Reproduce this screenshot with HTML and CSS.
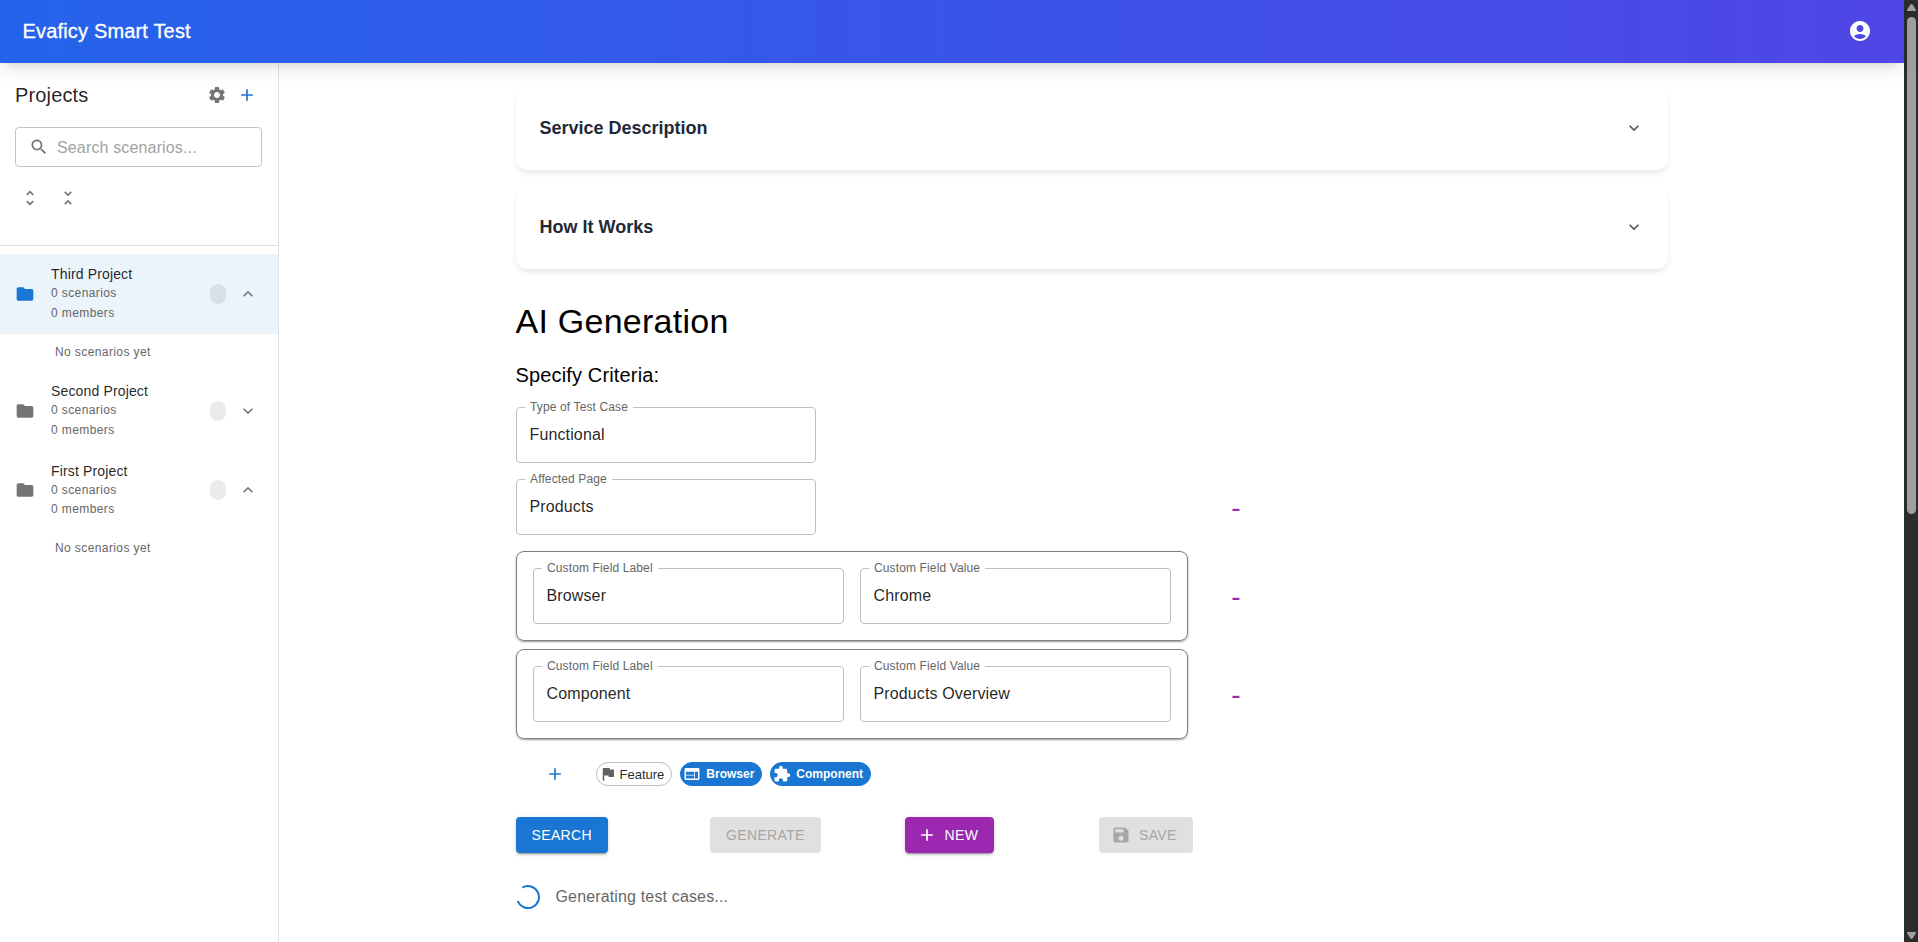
FILE: index.html
```html
<!DOCTYPE html>
<html lang="en">
<head>
    <meta charset="UTF-8">
    <meta name="viewport" content="width=device-width, initial-scale=1.0">
    <title>Evaficy Smart Test</title>
    <link rel="stylesheet" href="styles.css">
</head>
<body>
    <svg class="sprite">
        <symbol id="add" viewBox="0 0 24 24"><path d="M19 13h-6v6h-2v-6H5v-2h6V5h2v6h6z"/></symbol>
        <symbol id="more" viewBox="0 0 24 24"><path d="M16.59 8.59 12 13.17 7.41 8.59 6 10l6 6 6-6z"/></symbol>
        <symbol id="less" viewBox="0 0 24 24"><path d="m12 8-6 6 1.41 1.41L12 10.83l4.59 4.58L18 14z"/></symbol>
        <symbol id="folder" viewBox="0 0 24 24"><path d="M10 4H4c-1.1 0-1.99.9-1.99 2L2 18c0 1.1.9 2 2 2h16c1.1 0 2-.9 2-2V8c0-1.1-.9-2-2-2h-8z"/></symbol>
    </svg>

    <div class="app">
        <header class="header">
            <div class="brand">Evaficy Smart Test</div>
            <svg class="icon icon-lg" viewBox="0 0 24 24"><path d="M12 2C6.48 2 2 6.48 2 12s4.48 10 10 10 10-4.48 10-10S17.52 2 12 2m0 4c1.93 0 3.5 1.57 3.5 3.5S13.93 13 12 13s-3.5-1.57-3.5-3.5S10.07 6 12 6m0 14c-2.03 0-4.43-.82-6.14-2.88C7.55 15.8 9.68 15 12 15s4.45.8 6.14 2.12C16.43 19.18 14.03 20 12 20"/></svg>
        </header>

        <div class="content">
            <aside class="sidebar">
                <div class="sidebar-top">
                    <div class="sidebar-title">
                        <h2>Projects</h2>
                        <svg class="icon" viewBox="0 0 24 24"><path d="M19.14 12.94c.04-.3.06-.61.06-.94 0-.32-.02-.64-.07-.94l2.03-1.58c.18-.14.23-.41.12-.61l-1.92-3.32c-.12-.22-.37-.29-.59-.22l-2.39.96c-.5-.38-1.03-.7-1.62-.94l-.36-2.54c-.04-.24-.24-.41-.48-.41h-3.84c-.24 0-.43.17-.47.41l-.36 2.54c-.59.24-1.13.57-1.62.94l-2.39-.96c-.22-.08-.47 0-.59.22L2.74 8.87c-.12.21-.08.47.12.61l2.03 1.58c-.05.3-.09.63-.09.94s.02.64.07.94l-2.03 1.58c-.18.14-.23.41-.12.61l1.92 3.32c.12.22.37.29.59.22l2.39-.96c.5.38 1.03.7 1.62.94l.36 2.54c.05.24.24.41.48.41h3.84c.24 0 .44-.17.47-.41l.36-2.54c.59-.24 1.13-.56 1.62-.94l2.39.96c.22.08.47 0 .59-.22l1.92-3.32c.12-.22.07-.47-.12-.61zM12 15.6c-1.98 0-3.6-1.62-3.6-3.6s1.62-3.6 3.6-3.6 3.6 1.62 3.6 3.6-1.62 3.6-3.6 3.6"/></svg>
                        <svg class="icon blue"><use href="#add"/></svg>
                    </div>
                    <div class="search">
                        <svg class="icon" viewBox="0 0 24 24"><path d="M15.5 14h-.79l-.28-.27C15.41 12.59 16 11.11 16 9.5 16 5.91 13.09 3 9.5 3S3 5.91 3 9.5 5.91 16 9.5 16c1.61 0 3.09-.59 4.23-1.57l.27.28v.79l5 4.99L20.49 19zm-6 0C7.01 14 5 11.99 5 9.5S7.01 5 9.5 5 14 7.01 14 9.5 11.99 14 9.5 14"/></svg>
                        <span>Search scenarios...</span>
                    </div>
                    <div class="tools">
                        <svg class="icon" viewBox="0 0 24 24"><path d="M12 5.83 15.17 9l1.41-1.41L12 3 7.41 7.59 8.83 9zm0 12.34L8.83 15l-1.41 1.41L12 21l4.59-4.59L15.17 15z"/></svg>
                        <svg class="icon" viewBox="0 0 24 24"><path d="M7.41 18.59 8.83 20 12 16.83 15.17 20l1.41-1.41L12 14zm9.18-13.18L15.17 4 12 7.17 8.83 4 7.41 5.41 12 10z"/></svg>
                    </div>
                </div>

                <div class="projects">
                    <div class="project active">
                        <svg class="icon blue"><use href="#folder"/></svg>
                        <div class="project-text">
                            <div class="name">Third Project</div>
                            <div class="caption">0 scenarios</div>
                            <div class="caption">0 members</div>
                        </div>
                        <span class="count"></span>
                        <svg class="icon"><use href="#less"/></svg>
                    </div>
                    <div class="caption empty">No scenarios yet</div>
                    <div class="project">
                        <svg class="icon"><use href="#folder"/></svg>
                        <div class="project-text">
                            <div class="name">Second Project</div>
                            <div class="caption">0 scenarios</div>
                            <div class="caption">0 members</div>
                        </div>
                        <span class="count"></span>
                        <svg class="icon"><use href="#more"/></svg>
                    </div>
                    <div class="project">
                        <svg class="icon"><use href="#folder"/></svg>
                        <div class="project-text">
                            <div class="name">First Project</div>
                            <div class="caption">0 scenarios</div>
                            <div class="caption">0 members</div>
                        </div>
                        <span class="count"></span>
                        <svg class="icon"><use href="#less"/></svg>
                    </div>
                    <div class="caption empty">No scenarios yet</div>
                </div>
            </aside>

            <main class="main">
                <section class="card">
                    <h3>Service Description</h3>
                    <svg class="icon"><use href="#more"/></svg>
                </section>
                <section class="card">
                    <h3>How It Works</h3>
                    <svg class="icon"><use href="#more"/></svg>
                </section>

                <h1>AI Generation</h1>
                <h2 class="criteria-title">Specify Criteria:</h2>

                <div class="criteria">
                    <div class="row">
                        <div class="field"><label>Type of Test Case</label>Functional</div>
                    </div>
                    <div class="row">
                        <div class="field"><label>Affected Page</label>Products</div>
                        <button class="remove">-</button>
                    </div>
                    <div class="row custom">
                        <div class="group">
                            <div class="field"><label>Custom Field Label</label>Browser</div>
                            <div class="field"><label>Custom Field Value</label>Chrome</div>
                        </div>
                        <button class="remove">-</button>
                    </div>
                    <div class="row custom">
                        <div class="group">
                            <div class="field"><label>Custom Field Label</label>Component</div>
                            <div class="field"><label>Custom Field Value</label>Products Overview</div>
                        </div>
                        <button class="remove">-</button>
                    </div>
                </div>

                <div class="chips">
                    <svg class="icon blue"><use href="#add"/></svg>
                    <span class="chip">
                        <svg class="chip-icon" viewBox="0 0 24 24"><path d="M14.4 6 14 4H5v17h2v-7h5.6l.4 2h7V6z"/></svg>
                        Feature
                    </span>
                    <span class="chip selected">
                        <svg class="chip-icon" viewBox="0 0 24 24"><path d="M20 4H4c-1.1 0-1.99.9-1.99 2L2 18c0 1.1.9 2 2 2h16c1.1 0 2-.9 2-2V6c0-1.1-.9-2-2-2m-5 14H4v-4h11zm0-5H4V9h11zm5 5h-4V9h4z"/></svg>
                        Browser
                    </span>
                    <span class="chip selected">
                        <svg class="chip-icon" viewBox="0 0 24 24"><path d="M20.5 11H19V7c0-1.1-.9-2-2-2h-4V3.5C13 2.12 11.88 1 10.5 1S8 2.12 8 3.5V5H4c-1.1 0-1.99.9-1.99 2v3.8H3.5c1.49 0 2.7 1.21 2.7 2.7s-1.21 2.7-2.7 2.7H2V20c0 1.1.9 2 2 2h3.8v-1.5c0-1.49 1.21-2.7 2.7-2.7s2.7 1.21 2.7 2.7V22H17c1.1 0 2-.9 2-2v-4h1.5c1.38 0 2.5-1.12 2.5-2.5S21.88 11 20.5 11"/></svg>
                        Component
                    </span>
                </div>

                <div class="actions">
                    <div><button class="btn primary">SEARCH</button></div>
                    <div><button class="btn" disabled>GENERATE</button></div>
                    <div><button class="btn secondary"><svg class="icon"><use href="#add"/></svg>NEW</button></div>
                    <div><button class="btn" disabled><svg class="icon" viewBox="0 0 24 24"><path d="M17 3H5c-1.11 0-2 .9-2 2v14c0 1.1.89 2 2 2h14c1.1 0 2-.9 2-2V7zm-5 16c-1.66 0-3-1.34-3-3s1.34-3 3-3 3 1.34 3 3-1.34 3-3 3m3-10H5V5h10z"/></svg>SAVE</button></div>
                </div>

                <div class="progress">
                    <svg class="spinner" viewBox="0 0 24 24"><path d="M6.3 2.6A11 11 0 1 1 1.7 16"/></svg>
                    <span>Generating test cases...</span>
                </div>
            </main>
        </div>
    </div>

    <div class="scrollbar">
        <svg class="arrow" viewBox="0 0 9 7"><path d="M4.5 0 Q5.2 0 5.7.8L8.8 5.4Q9.3 7 8 7H1Q-.3 7 .2 5.4L3.3.8Q3.8 0 4.5 0"/></svg>
        <div class="thumb"></div>
        <svg class="arrow down" viewBox="0 0 9 7"><path d="M4.5 7 Q5.2 7 5.7 6.2L8.8 1.6Q9.3 0 8 0H1Q-.3 0 .2 1.6L3.3 6.2Q3.8 7 4.5 7"/></svg>
    </div>
</body>
</html>
```

FILE: styles.css
```css
* {
    box-sizing: border-box;
}

body {
    display: flex;
    height: 942px;
    margin: 0;
    overflow: hidden;
    font-family: 'Liberation Sans', Arial, sans-serif;
    font-size: 16px;
    color: rgba(0, 0, 0, 0.87);
    background-color: #fff;
}

h1, h2, h3 {
    margin: 0;
    font-weight: 400;
}

.sprite {
    display: none;
}

.app {
    flex: 1;
    display: flex;
    flex-direction: column;
}

.icon {
    width: 20px;
    height: 20px;
    flex-shrink: 0;
    fill: #757575;
}

.icon-lg {
    width: 24px;
    height: 24px;
    fill: #fff;
}

.icon.blue {
    fill: #1976d2;
}

/* Header */
.header {
    position: relative;
    z-index: 1;
    display: flex;
    align-items: center;
    justify-content: space-between;
    height: 63px;
    padding: 0 32px 1px 22.5px;
    color: #fff;
    background: linear-gradient(90deg, #2563eb, #4f46e5);
    box-shadow: 0 10px 15px -3px rgba(0, 0, 0, 0.1), 0 4px 6px -4px rgba(0, 0, 0, 0.1);
}

.brand {
    font-size: 20px;
    letter-spacing: 0.17px;
    -webkit-text-stroke: 0.3px #fff;
}

.content {
    flex: 1;
    display: flex;
}

/* Sidebar */
.sidebar {
    width: 279px;
    border-right: 1px solid #e0e0e0;
}

.sidebar-top {
    height: 183px;
    padding: 16px 16px 16px 15px;
    border-bottom: 1px solid #e0e0e0;
}

.sidebar-title {
    display: flex;
    align-items: center;
    gap: 10px;
    height: 32px;
    padding-right: 5px;
}

.sidebar-title h2 {
    flex: 1;
    font-size: 20px;
    letter-spacing: 0.15px;
}

.search {
    display: flex;
    align-items: center;
    gap: 8px;
    height: 40px;
    margin-top: 16px;
    padding: 0 13px;
    border: 1px solid #c4c4c4;
    border-radius: 4px;
    color: #a2a2a2;
    letter-spacing: 0.15px;
}

.search span {
    padding-top: 2px;
}

.tools {
    display: flex;
    gap: 18px;
    padding: 21px 5px;
}

.projects {
    padding-top: 8px;
}

.project {
    display: flex;
    align-items: center;
    height: 79.6px;
    padding: 0 20px 0 15px;
}

.project.active {
    height: 80px;
    background-color: #ebf3fb;
}

.project-text {
    flex: 1;
    padding-left: 16px;
}

.name {
    font-size: 14px;
    line-height: 20px;
    letter-spacing: 0.15px;
}

.caption {
    font-size: 12px;
    line-height: 19.8px;
    letter-spacing: 0.4px;
    color: #666;
}

.empty {
    height: 37px;
    padding: 8.6px 0 0 55px;
}

.count {
    width: 16px;
    height: 20px;
    margin-right: 12px;
    border-radius: 8px;
    background-color: rgba(0, 0, 0, 0.08);
}

/* Main */
.main {
    flex: 1;
    padding: 24px 236px 0 236.5px;
}

.card {
    display: flex;
    align-items: center;
    justify-content: space-between;
    height: 83px;
    margin-bottom: 16px;
    padding: 0 24px 1px;
    border-radius: 12px;
    background-color: #fff;
    box-shadow: 0 4px 6px -1px rgba(0, 0, 0, 0.1);
}

.card h3 {
    font-size: 18px;
    font-weight: 700;
    color: #1f2937;
}

.card .icon {
    fill: #4b5563;
}

h1 {
    margin-top: 31px;
    font-size: 34px;
    line-height: 42px;
    letter-spacing: 0.25px;
    color: #000;
}

.criteria-title {
    margin-top: 17px;
    font-size: 20px;
    line-height: 32px;
    letter-spacing: 0.15px;
    color: #000;
}

.criteria {
    padding-top: 16px;
}

.row {
    display: flex;
    align-items: center;
    justify-content: space-between;
    width: 725px;
    margin-bottom: 16px;
}

.row.custom {
    margin-bottom: 8px;
}

.field {
    position: relative;
    width: 300px;
    height: 56px;
    padding-left: 13px;
    border: 1px solid #c0c0c0;
    border-radius: 4px;
    line-height: 53px;
    letter-spacing: 0.13px;
}

.field label {
    position: absolute;
    top: -9px;
    left: 8px;
    padding: 0 5px 0 5.5px;
    font-size: 12px;
    line-height: 16px;
    color: #666;
    background-color: #fff;
}

.group {
    display: flex;
    gap: 16px;
    width: 672px;
    padding: 16px;
    border: 1px solid #808080;
    border-radius: 8px;
    box-shadow: 0 1px 2px rgba(0, 0, 0, 0.4);
}

.group .field {
    flex: 1;
}

.remove {
    padding: 1px 0 0;
    border: none;
    font-family: inherit;
    font-size: 28px;
    line-height: 28px;
    color: #9c27b0;
    background: none;
}

/* Criteria chips */
.chips {
    display: flex;
    align-items: center;
    gap: 8px;
    padding: 15px 0 31px 29px;
}

.chips > .icon {
    margin: 0 23px 0 0;
}

.chip {
    display: flex;
    align-items: center;
    gap: 3px;
    height: 24px;
    padding: 0 7px 0 2px;
    border: 1px solid #bdbdbd;
    border-radius: 12px;
    font-size: 13px;
}

.chip.selected {
    gap: 5px;
    border-color: #1976d2;
    font-size: 12px;
    font-weight: 700;
    color: #fff;
    background-color: #1976d2;
}

.chip-icon {
    width: 18px;
    height: 18px;
    fill: #616161;
}

.selected .chip-icon {
    fill: #fff;
}

.actions {
    display: grid;
    grid-template-columns: repeat(4, 194.5px);
}

.btn {
    display: flex;
    align-items: center;
    gap: 8px;
    height: 36px;
    padding: 0 16px;
    border: none;
    border-radius: 4px;
    font-family: inherit;
    font-size: 14px;
    letter-spacing: 0.35px;
    color: #fff;
    box-shadow: 0 3px 1px -2px rgba(0, 0, 0, 0.2), 0 2px 2px 0 rgba(0, 0, 0, 0.14), 0 1px 5px 0 rgba(0, 0, 0, 0.12);
}

.btn .icon {
    margin-left: -4px;
    fill: currentColor;
}

.btn:disabled {
    color: #a6a6a6;
    background-color: #e0e0e0;
    box-shadow: none;
}

.primary {
    background-color: #1976d2;
}

.secondary {
    background-color: #9c27b0;
}

.progress {
    display: flex;
    align-items: center;
    gap: 16px;
    padding-top: 32px;
    letter-spacing: 0.15px;
    color: #666;
}

.spinner {
    width: 24px;
    height: 24px;
    fill: none;
    stroke: #1976d2;
    stroke-width: 2;
}

/* Window scrollbar */
.scrollbar {
    display: flex;
    flex-direction: column;
    align-items: center;
    width: 14px;
    padding: 4px 0 3px 1px;
    background-color: #2c2c2c;
}

.arrow {
    width: 9px;
    height: 7px;
    fill: #9f9f9f;
}

.thumb {
    width: 9px;
    height: 497px;
    margin-top: 6px;
    border-radius: 5px;
    background-color: #9f9f9f;
}

.down {
    margin-top: auto;
}
```
